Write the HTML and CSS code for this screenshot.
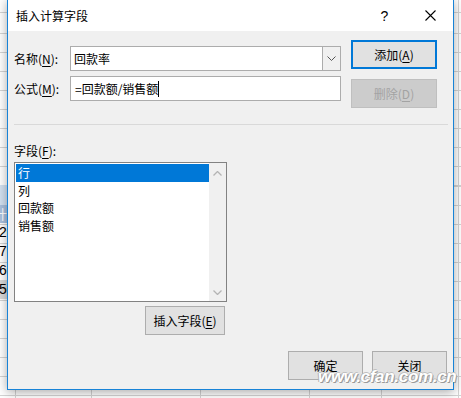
FILE: index.html
```html
<!DOCTYPE html>
<html lang="zh-CN">
<head>
    <meta charset="UTF-8" />
    <title>插入计算字段</title>
    <link rel="stylesheet" href="styles.css">
</head>
<body>
    <div class="sheet">
        <div class="col col-a">
            <div class="cell-gap"></div>
            <div class="cell cell-sel"></div>
            <div class="cell cell-head">计</div>
            <div class="cell cell-num">20</div>
            <div class="cell cell-num">70</div>
            <div class="cell cell-num">60</div>
            <div class="cell cell-num cell-grey">50</div>
        </div>
        <div class="col col-b"></div>
        <div class="col col-c"></div>
        <div class="col col-d"></div>
        <div class="col col-e"></div>
        <div class="col col-f"></div>
        <div class="col col-g"></div>
    </div>

    <div class="dialog">
        <div class="titlebar">
            <span class="title">插入计算字段</span>
            <span class="tb-btn tb-help">?</span>
            <span class="tb-btn tb-close">
                <svg width="11" height="11" viewBox="0 0 11 11">
                    <path d="M0.5 0.5 L10.5 10.5 M10.5 0.5 L0.5 10.5" stroke="#000" stroke-width="1.1" fill="none" />
                </svg>
            </span>
        </div>

        <div class="content">
            <div class="top">
                <div class="fields">
                    <div class="row">
                        <label class="lbl">名称(<u>N</u>):</label>
                        <div class="combo">
                            <span class="combo-text">回款率</span>
                            <span class="combo-arrow">
                                <svg width="9" height="5" viewBox="0 0 9 5">
                                    <path d="M0.5 0.5 L4.5 4.5 L8.5 0.5" stroke="#555" stroke-width="1" fill="none" />
                                </svg>
                            </span>
                        </div>
                    </div>
                    <div class="row">
                        <label class="lbl">公式(<u>M</u>):</label>
                        <div class="textbox">=回款额/销售额<span class="caret"></span></div>
                    </div>
                </div>
                <div class="actions">
                    <button class="btn btn-default">添加(<u>A</u>)</button>
                    <button class="btn btn-disabled">删除(<u>D</u>)</button>
                </div>
            </div>

            <div class="separator"></div>

            <div class="list-label">字段(<u>F</u>):</div>
            <div class="listbox">
                <div class="items">
                    <div class="item item-selected">行</div>
                    <div class="item">列</div>
                    <div class="item">回款额</div>
                    <div class="item">销售额</div>
                </div>
                <div class="scrollbar">
                    <svg width="9" height="5" viewBox="0 0 9 5">
                        <path d="M0.5 4.5 L4.5 0.5 L8.5 4.5" stroke="#b4b4b4" stroke-width="1.3" fill="none" />
                    </svg>
                    <svg width="9" height="5" viewBox="0 0 9 5">
                        <path d="M0.5 0.5 L4.5 4.5 L8.5 0.5" stroke="#b4b4b4" stroke-width="1.3" fill="none" />
                    </svg>
                </div>
            </div>
            <div class="insert-row">
                <button class="btn btn-insert">插入字段(<u>E</u>)</button>
            </div>

            <div class="footer">
                <button class="btn btn-foot">确定</button>
                <button class="btn btn-foot">关闭</button>
            </div>
        </div>
    </div>

    <div class="watermark">www.cfan.com.cn</div>
</body>
</html>
```

FILE: styles.css
```css
body {
    margin: 0;
    width: 461px;
    height: 398px;
    position: relative;
    overflow: hidden;
    font-family: "Noto Sans CJK SC", "Liberation Sans", sans-serif;
    font-size: 12px;
    color: #000;
    background: #fff;
}

/* spreadsheet behind the dialog */
.sheet {
    display: flex;
    width: 461px;
    height: 398px;
    overflow: hidden;
    background-color: #fff;
    background-image:
        linear-gradient(#d4d4d4, #d4d4d4),
        repeating-linear-gradient(to bottom, transparent 0, transparent 18px, #d4d4d4 18px, #d4d4d4 19.06px);
    background-size: 100% 1px, 100% 100%;
    background-position: 0 12px, 0 15px;
    background-repeat: no-repeat, repeat;
}

.col {
    height: 100%;
    border-right: 1px solid #d4d4d4;
    flex-shrink: 0;
    overflow: hidden;
}

.col-a { width: 15px; }
.col-b { width: 75px; }
.col-c { width: 108px; }
.col-d { width: 108px; }
.col-e { width: 71px; }
.col-f { width: 76px; }
.col-g { flex: 1; min-width: 0; border-right: none; }

.cell-gap { height: 185px; }

.cell {
    width: 7px;
    overflow: hidden;
    font-family: "Liberation Sans", sans-serif;
    font-size: 14px;
    line-height: 18px;
    white-space: nowrap;
}

.cell-sel {
    height: 20px;
    background: #d3e1f1;
}

.cell-head {
    height: 18px;
    background: #a9c0de;
    color: #fff;
    font-family: "Noto Sans CJK SC", sans-serif;
    font-size: 13px;
    direction: rtl;
}

.cell-num {
    height: 19px;
    text-indent: -1px;
}

.cell-grey { background: #d9d9d9; }

/* dialog window */
.dialog {
    position: absolute;
    left: 7px;
    top: -1px;
    width: 445px;
    height: 389px;
    border: 1px solid #1883d7;
    background: #f0f0f0;
    box-shadow: 0 2px 10px rgba(0, 0, 0, 0.35);
}

.titlebar {
    height: 31px;
    background: #fff;
    display: flex;
    align-items: center;
    padding-left: 8px;
}

.title {
    flex: 1;
    font-size: 12px;
}

.tb-btn {
    width: 45px;
    height: 31px;
    display: flex;
    align-items: center;
    justify-content: center;
}

.tb-help {
    font-family: "Liberation Sans", sans-serif;
    font-size: 14px;
}

.tb-close { width: 46px; }

.content {
    padding: 9px 0 0 6px;
}

.top {
    display: flex;
}

.fields {
    padding-top: 6px;
    display: flex;
    flex-direction: column;
    gap: 5px;
}

.row {
    display: flex;
    align-items: center;
}

.lbl {
    width: 56px;
}

u {
    text-decoration: underline;
    text-underline-offset: 2px;
}

.combo, .textbox {
    width: 271px;
    height: 25px;
    box-sizing: border-box;
    border: 1px solid #acacac;
    background: #fff;
    display: flex;
    align-items: center;
}

.combo-text {
    flex: 1;
    padding-left: 3px;
}

.combo-arrow {
    width: 17px;
    height: 100%;
    border-left: 1px solid #acacac;
    background: #f0f0f0;
    display: flex;
    align-items: center;
    justify-content: center;
}

.textbox {
    padding-left: 4px;
}

.caret {
    display: inline-block;
    width: 1px;
    height: 16px;
    background: #000;
}

.actions {
    margin-left: 10px;
    display: flex;
    flex-direction: column;
    gap: 10px;
}

.btn {
    font-family: "Noto Sans CJK SC", "Liberation Sans", sans-serif;
    font-size: 12px;
    color: #000;
    background: #e1e1e1;
    border: 1px solid #adadad;
    padding: 0;
    box-sizing: border-box;
}

.btn-default, .btn-disabled {
    width: 86px;
    height: 29px;
}

.btn-default {
    border: 2px solid #0078d7;
}

.btn-disabled {
    background: #cccccc;
    border-color: #bfbfbf;
    color: #a3a3a3;
}

.separator {
    margin: 16px 5px 0 0;
    height: 1px;
    background: #d9d9d9;
}

.list-label {
    margin-top: 18px;
    line-height: 16px;
}

.listbox {
    margin-top: 3px;
    width: 213px;
    height: 140px;
    box-sizing: border-box;
    border: 1px solid #828282;
    background: #fff;
    display: flex;
}

.items {
    flex: 1;
    padding: 1px 0 0 1px;
}

.item {
    height: 17.7px;
    line-height: 17.7px;
    padding-left: 2px;
}

.item-selected {
    background: #0078d7;
    color: #fff;
}

.scrollbar {
    width: 17px;
    background: #f0f0f0;
    display: flex;
    flex-direction: column;
    justify-content: space-between;
    align-items: center;
    padding: 8px 0 6px;
    box-sizing: border-box;
}

.insert-row {
    width: 211px;
    display: flex;
    justify-content: flex-end;
    margin-top: 4px;
}

.btn-insert {
    width: 80px;
    height: 29px;
}

.footer {
    display: flex;
    justify-content: flex-end;
    gap: 9px;
    margin: 16px 6px 0 0;
}

.btn-foot {
    width: 75px;
    height: 29px;
}

.watermark {
    position: absolute;
    left: 318px;
    top: 367px;
    font-family: "Liberation Sans", sans-serif;
    font-weight: bold;
    font-style: italic;
    font-size: 17px;
    letter-spacing: -0.3px;
    color: #fff;
    text-shadow: 1px 1px 0 #9a9a9a, -1px 0 0 #b0b0b0, 0 -1px 0 #c0c0c0;
}
```
